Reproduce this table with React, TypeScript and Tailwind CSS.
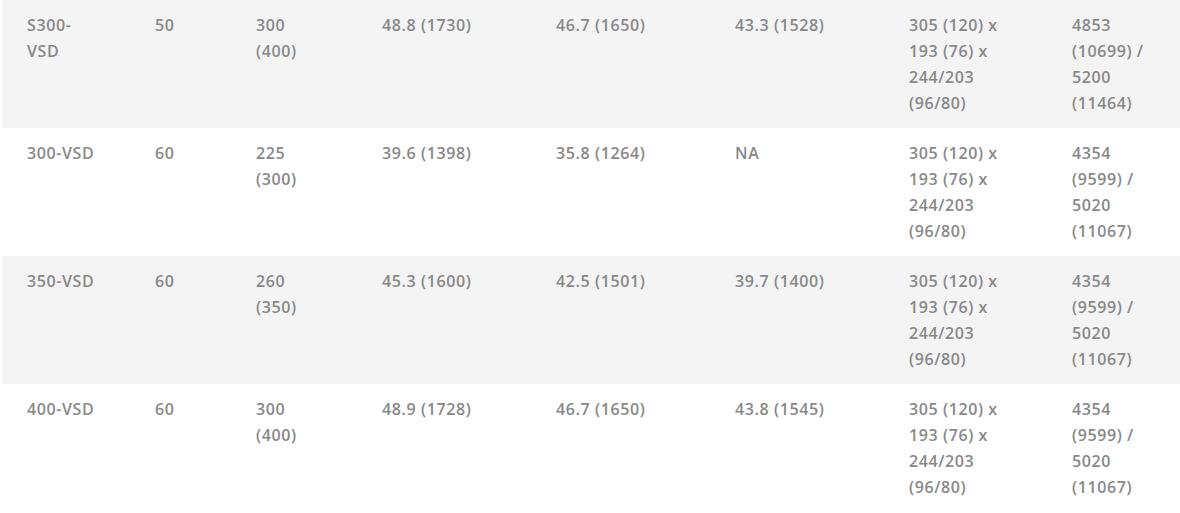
const rows: string[][][] = [
  [
    ["S300-", "VSD"],
    ["50"],
    ["300", "(400)"],
    ["48.8 (1730)"],
    ["46.7 (1650)"],
    ["43.3 (1528)"],
    ["305 (120) x", "193 (76) x", "244/203", "(96/80)"],
    ["4853", "(10699) /", "5200", "(11464)"],
  ],
  [
    ["300-VSD"],
    ["60"],
    ["225", "(300)"],
    ["39.6 (1398)"],
    ["35.8 (1264)"],
    ["NA"],
    ["305 (120) x", "193 (76) x", "244/203", "(96/80)"],
    ["4354", "(9599) /", "5020", "(11067)"],
  ],
  [
    ["350-VSD"],
    ["60"],
    ["260", "(350)"],
    ["45.3 (1600)"],
    ["42.5 (1501)"],
    ["39.7 (1400)"],
    ["305 (120) x", "193 (76) x", "244/203", "(96/80)"],
    ["4354", "(9599) /", "5020", "(11067)"],
  ],
  [
    ["400-VSD"],
    ["60"],
    ["300", "(400)"],
    ["48.9 (1728)"],
    ["46.7 (1650)"],
    ["43.8 (1545)"],
    ["305 (120) x", "193 (76) x", "244/203", "(96/80)"],
    ["4354", "(9599) /", "5020", "(11067)"],
  ],
];

const widths = [
  "w-[128px]",
  "w-[101px]",
  "w-[126px]",
  "w-[174px]",
  "w-[179px]",
  "w-[174px]",
  "w-[163px]",
  "w-[133px]",
];

export default function App() {
  return (
    <div className="min-h-[513px] bg-white pl-[2px] font-['Open_Sans',sans-serif]">
      <table className="w-[1178px] table-fixed border-collapse">
        <tbody>
          {rows.map((row, i) => (
            <tr
              key={i}
              className={`h-[128px] ${i % 2 === 0 ? "bg-[#f4f4f4]" : "bg-white"}`}
            >
              {row.map((cell, j) => (
                <td
                  key={j}
                  className={`${widths[j]} align-top pl-[25px] pt-[12px] text-[16px] leading-[26px] font-semibold tracking-[0.6px] text-[#888888]`}
                >
                  {cell.map((line, k) => (
                    <div key={k} className="whitespace-nowrap">
                      {line}
                    </div>
                  ))}
                </td>
              ))}
            </tr>
          ))}
        </tbody>
      </table>
    </div>
  );
}
